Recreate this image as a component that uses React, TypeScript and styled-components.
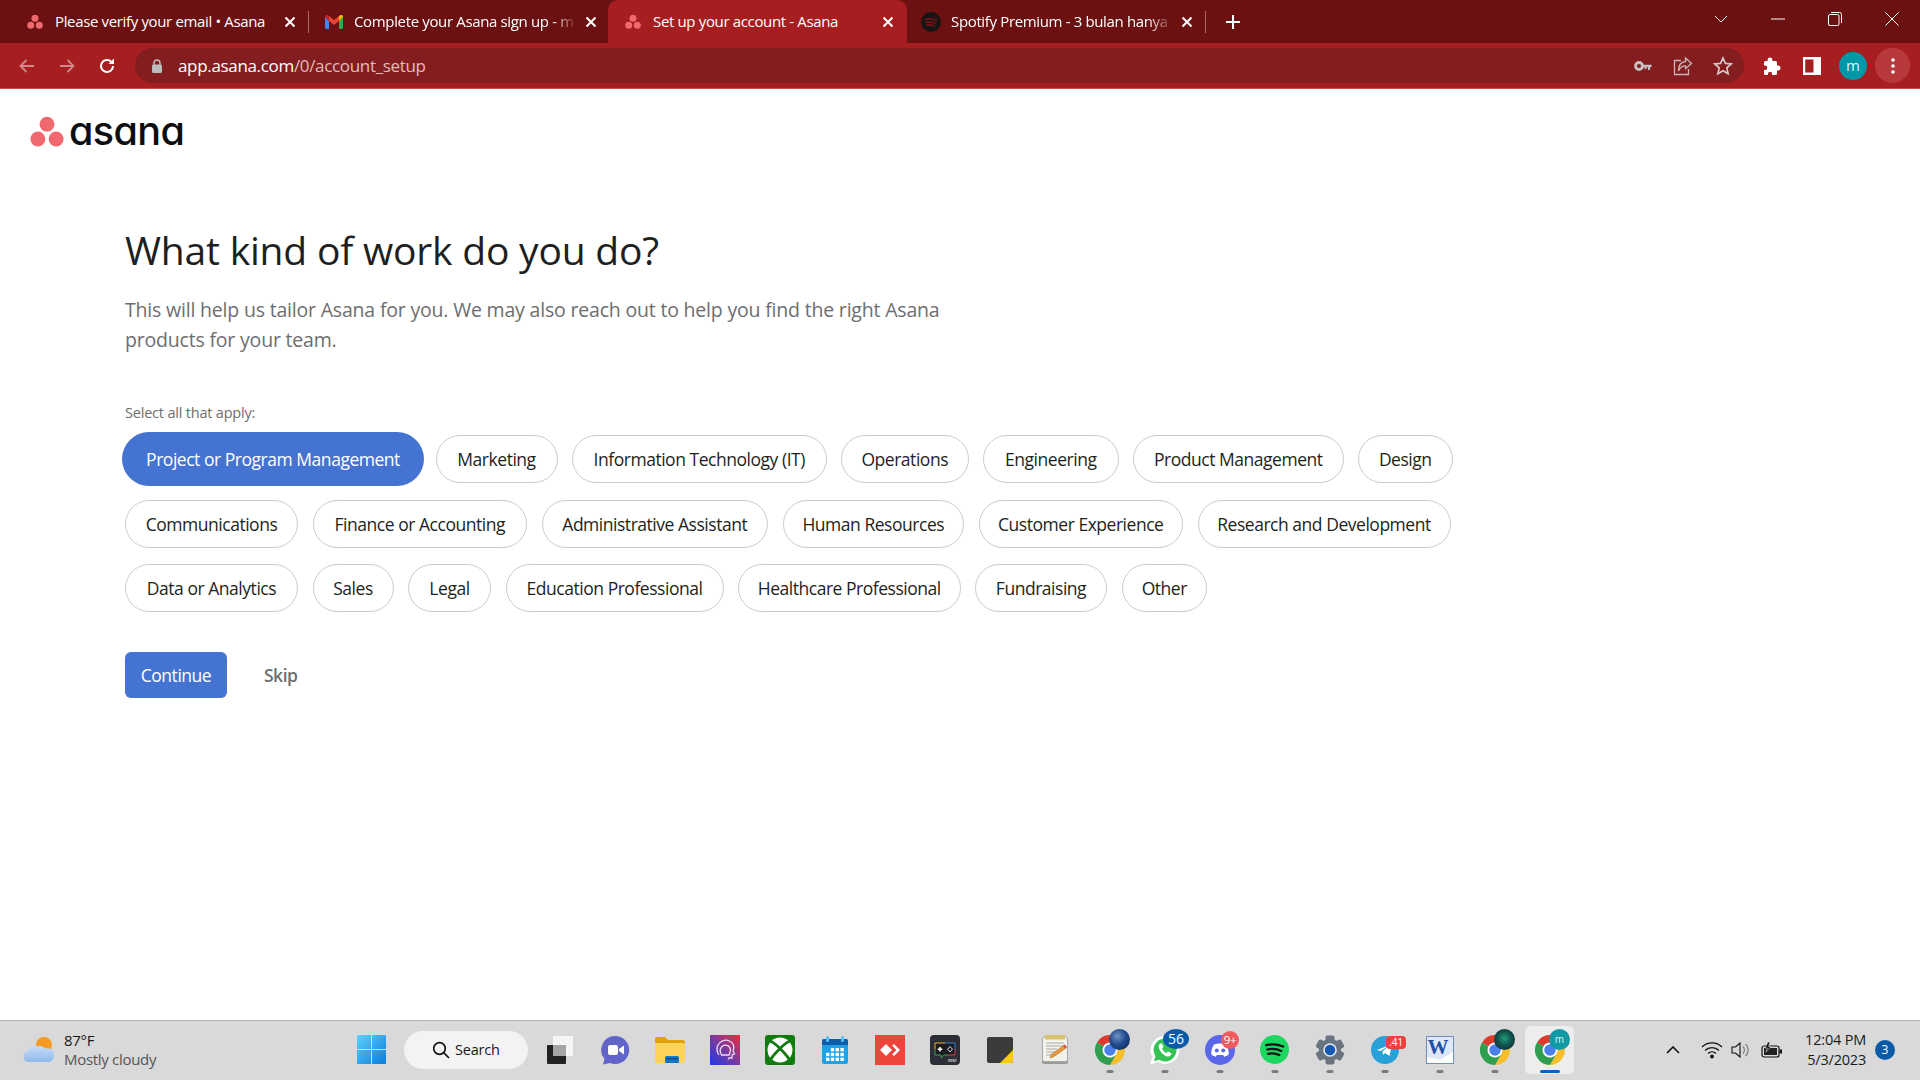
import React from 'react';
import styled, { createGlobalStyle } from 'styled-components';

const FONT = `"Open Sans", "Noto Sans", "Liberation Sans", sans-serif`;

const Global = createGlobalStyle`
  html, body { margin: 0; padding: 0; background: #fff; }
  * { box-sizing: border-box; }
`;

const Page = styled.div`
  width: 1920px; height: 1080px; overflow: hidden;
  display: flex; flex-direction: column;
  font-family: ${FONT}; background: #fff;
`;

/* ---------- browser chrome ---------- */
const TabStrip = styled.div`
  height: 43px; flex: none; background: #6b1111; display: flex; align-items: stretch;
  padding-left: 10px; color: #fff;
`;
const Tab = styled.div<{ $active?: boolean; $sep?: boolean; $pad?: number }>`
  position: relative; width: 299px; flex: none; display: flex; align-items: center;
  padding: 0 12px 0 ${p => p.$pad ?? 17}px;
  font-size: 15px; letter-spacing: -0.35px;
  background: ${p => (p.$active ? '#a61e1f' : 'transparent')};
  border-radius: ${p => (p.$active ? '10px 10px 0 0' : '0')};
  &::after {
    content: ''; position: absolute; right: 0; top: 11px; height: 22px; width: 1px;
    background: ${p => (p.$sep ? '#a86a6a' : 'transparent')};
  }
`;
const FavBox = styled.span`
  width: 16px; height: 20px; flex: none; display: flex; align-items: center; justify-content: center;
  & > svg { flex: none; }
`;
const TabTitle = styled.span<{ $fade?: boolean }>`
  flex: 1; margin-left: 12px; white-space: nowrap; padding-bottom: 2px;
  ${p => (p.$fade ? '-webkit-mask-image: linear-gradient(90deg, #000 calc(100% - 22px), rgba(0,0,0,.15) 100%);' : '')}
`;
const CloseBox = styled.span`
  width: 14px; height: 14px; flex: none; display: flex; align-items: center; justify-content: center; margin-left: 10px;
`;
const NewTab = styled.div`
  width: 54px; display: flex; align-items: center; justify-content: center;
`;
const Spring = styled.div`flex: 1;`;
const WinCtrl = styled.div`
  width: 57px; display: flex; align-items: center; justify-content: center; padding-bottom: 6px;
`;
const WinControls = styled.div`
  display: flex;
`;
const Toolbar = styled.div`
  height: 46px; flex: none; background: #a61e1f; border-bottom: 1px solid #c65050;
  display: flex; align-items: flex-start; padding-top: 5px; padding-left: 7px;
`;
const NavBtn = styled.div`
  width: 40px; height: 35px; display: flex; align-items: center; justify-content: center; flex: none;
`;
const Omnibox = styled.div`
  width: 1609px; height: 35px; margin-left: 8px; flex: none; background: #841d1f; border-radius: 18px;
  display: flex; align-items: center; padding-left: 16px; font-size: 17px; letter-spacing: -0.33px;
`;
const Host = styled.span`color: #fff; margin-left: 15px;`;
const UrlPath = styled.span`color: #e0bcbc;`;
const OmniActions = styled.div`
  margin-left: auto; display: flex; align-items: center; padding-right: 1px;
`;
const OmniAction = styled.div`
  width: 40px; height: 35px; display: flex; align-items: center; justify-content: center;
`;
const ToolActions = styled.div`
  display: flex; align-items: center; margin-left: 8px;
`;
const Avatar = styled.div`
  width: 28px; height: 28px; border-radius: 50%; background: #0097a7; color: #d9f5f8;
  font-size: 15px; display: flex; align-items: center; justify-content: center; margin: 0 8px 0 7px; line-height: 1;
`;
const MenuBtn = styled.div`
  width: 35px; height: 35px; border-radius: 50%; background: #b8393b; display: flex; align-items: center; justify-content: center;
`;

/* ---------- content ---------- */
const Content = styled.main`
  flex: 1; display: flex; flex-direction: column; padding: 0 0 0 125px; min-height: 0;
`;
const LogoRow = styled.div`
  display: flex; align-items: center; margin: 28px 0 0 -95px; height: 30px; gap: 5px;
`;
const Wordmark = styled.span`
  font-family: Inter, ${FONT}; font-weight: 500; font-size: 39.5px; letter-spacing: -0.6px; line-height: 30px;
  color: #0d0e10; font-feature-settings: "cv11" 1; padding-bottom: 3px;
`;
const Title = styled.h1`
  margin: 79px 0 0; font-size: 39px; font-weight: 400; line-height: 48px; color: #1e1f21; letter-spacing: -0.2px;
`;
const Lead = styled.p`
  margin: 21px 0 0; width: 860px; font-size: 19.5px; line-height: 30px; color: #6d6e6f; letter-spacing: -0.19px;
`;
const Hint = styled.div`
  margin-top: 48px; font-size: 14.5px; line-height: 20px; color: #6d6e6f; letter-spacing: -0.2px;
`;
const Pills = styled.div`
  margin-top: 12px; width: 1340px; display: flex; flex-wrap: wrap; align-items: center; column-gap: 14.5px; row-gap: 16.5px;
`;
const Pill = styled.button<{ $selected?: boolean; $w: number }>`
  font-family: ${FONT}; font-size: 17.5px; letter-spacing: -0.47px; white-space: nowrap; padding: 0;
  width: ${p => p.$w}px;
  height: ${p => (p.$selected ? 54 : 48)}px;
  margin: ${p => (p.$selected ? '-3px' : '0')};
  border-radius: 27px; flex: none;
  border: ${p => (p.$selected ? 'none' : '1px solid #cfcbcb')};
  background: ${p => (p.$selected ? '#4573d2' : '#fff')};
  color: ${p => (p.$selected ? '#fff' : '#1e1f21')};
`;
const Actions = styled.div`
  margin-top: 40px; display: flex; align-items: center; gap: 37px;
`;
const Continue = styled.button`
  width: 102px; height: 46px; border: none; border-radius: 6px; background: #4573d2; color: #fff;
  font-family: ${FONT}; font-size: 17.5px; letter-spacing: -0.47px; padding: 0;
`;
const Skip = styled.span`
  font-size: 17.5px; font-weight: 600; color: #6d6e6f; letter-spacing: -0.5px;
`;

/* ---------- taskbar ---------- */
const Taskbar = styled.footer`
  height: 60px; flex: none; background: #d9d9d9; border-top: 1px solid #b3b3b3; padding-bottom: 2px;
  display: flex; align-items: center; position: relative;
`;
const Weather = styled.div`
  width: 344px; flex: none; display: flex; align-items: center; padding-left: 23px; gap: 7px;
`;
const WeatherText = styled.div`
  font-size: 15px; line-height: 19px; color: #1a1a1a; letter-spacing: -0.3px;
`;
const WeatherSub = styled.div`color: #555;`;
const TaskItem = styled.div<{ $active?: boolean }>`
  position: relative; width: 55px; height: 48px; flex: none; display: flex; align-items: center; justify-content: center;
  &::before {
    content: ''; position: absolute; inset: 0 3px; border-radius: 5px;
    background: ${p => (p.$active ? '#ededed' : 'transparent')};
  }
  & > svg { position: relative; }
`;
const RunDot = styled.i<{ $active?: boolean }>`
  position: absolute; bottom: 1px; left: 50%; transform: translateX(-50%);
  width: ${p => (p.$active ? 20 : 7)}px; height: 3px; border-radius: 2px;
  background: ${p => (p.$active ? '#0067c0' : '#7b7b7b')};
`;
const CountBadge = styled.span`
  position: absolute; top: 3px; right: 3px; width: 26px; height: 20px;
  border-radius: 50%; background: #0a5aa8; color: #fff; font-size: 14px;
  display: flex; align-items: center; justify-content: center; line-height: 1;
`;
const SmallBadge = styled.span`
  position: absolute; top: 5px; right: 8px; width: 18px; height: 18px;
  border-radius: 50%; background: #ef5a5f; color: #fff; font-size: 11.5px;
  display: flex; align-items: center; justify-content: center; line-height: 1; letter-spacing: -0.3px;
`;
const RectBadge = styled.span`
  position: absolute; top: 10px; right: 6px; width: 20px; height: 13px; border-radius: 4px; background: #ee3f3f;
  color: #fff; font-size: 10.5px; display: flex; align-items: center; justify-content: center; line-height: 1; letter-spacing: -0.3px;
`;
const ProfileBubble = styled.span<{ $bg: string }>`
  position: absolute; top: 3px; right: 7px; width: 21px; height: 21px; border-radius: 50%;
  background: ${p => p.$bg}; color: #d9f5f8; font-size: 10px; display: flex; align-items: center; justify-content: center; line-height: 1;
`;
const SearchBox = styled.div`
  width: 124px; height: 38px; flex: none; margin: 0 4px 0 5px; border-radius: 19px; background: #f3f3f3;
  display: flex; align-items: center; padding-left: 28px; gap: 5px; font-size: 14.5px; color: #1a1a1a; letter-spacing: -0.2px;
`;
const Tray = styled.div`
  position: absolute; inset: 0 0 2px auto; display: flex; align-items: center;
`;
const TrayIcon = styled.div<{ $w: number }>`
  width: ${p => p.$w}px; display: flex; align-items: center; justify-content: center;
`;
const Clock = styled.div`
  width: 74px; margin-left: 2px; text-align: right; font-size: 14.5px; line-height: 20px; color: #1a1a1a; letter-spacing: -0.2px;
`;
const NotifyBadge = styled.div`
  width: 20px; height: 20px; border-radius: 50%; background: #0a5aa8; color: #fff; font-size: 12px;
  display: flex; align-items: center; justify-content: center; margin: 0 25px 0 9px;
`;

/* ---------- icons ---------- */
const Close = () => (
  <svg width="12" height="12" viewBox="0 0 12 12"><path d="M1.500 1.500l9 9M10.500 1.500l-9 9" stroke="#fff" strokeWidth="2" /></svg>
);
const AsanaDots = ({ s = 16, c = '#f0696e' }: { s?: number; c?: string }) => (
  <svg width={s} height={s} viewBox="0 0 32 32">
    <circle cx="16" cy="8.600" r="7" fill={c} /><circle cx="7.400" cy="22.600" r="7" fill={c} /><circle cx="24.600" cy="22.600" r="7" fill={c} />
  </svg>
);
const Gmail = () => (
  <svg width="18" height="14" viewBox="0 0 18 14">
    <path d="M0 2v10.500A1.500 1.500 0 0 0 1.500 14H4V6z" fill="#4285f4" />
    <path d="M18 2v10.500a1.500 1.500 0 0 1-1.500 1.500H14V6z" fill="#34a853" />
    <path d="M14 6V1l1.500-1C16.800-.5 18 .5 18 2z" fill="#fbbc04" />
    <path d="M4 6V1L2.500 0C1.200-.5 0 .5 0 2z" fill="#c5221f" />
    <path d="M4 1l5 4 5-4v5L9 10 4 6z" fill="#ea4335" />
  </svg>
);
const SpotifyDark = () => (
  <svg width="20" height="20" viewBox="0 0 20 20">
    <circle cx="10" cy="10" r="10" fill="#181414" />
    <path d="M4.500 7.400c3.700-1 7.800-.7 11 1M5.200 10.400c3-.8 6.500-.5 9.300 1M5.800 13.200c2.500-.6 5.300-.4 7.600.9" fill="none" stroke="#6f1416" strokeWidth="1.700" strokeLinecap="round" />
  </svg>
);
const Arrow = ({ d, c }: { d: string; c: string }) => (
  <svg width="18" height="18" viewBox="0 0 18 18"><path d={d} fill="none" stroke={c} strokeWidth="1.800" /></svg>
);
const BACK = 'M16 9H3M8.500 3l-6 6 6 6';
const FORWARD = 'M2 9h13M9.500 3l6 6-6 6';
const Reload = () => (
  <svg width="18" height="18" viewBox="0 0 18 18">
    <path d="M15 9a6 6 0 1 1-1.800-4.300" fill="none" stroke="#fff" strokeWidth="2" />
    <path d="M16 1.500V7h-5.500z" fill="#fff" />
  </svg>
);
const Lock = () => (
  <svg width="12" height="14" viewBox="0 0 12 14">
    <path d="M3 6V4a3 3 0 0 1 6 0v2" fill="none" stroke="#bdbdbd" strokeWidth="1.500" />
    <rect x="1" y="5.500" width="10" height="8.500" rx="1.500" fill="#bdbdbd" />
  </svg>
);
const KeyIcon = () => (
  <svg width="18" height="12" viewBox="0 0 18 12">
    <circle cx="5" cy="6" r="3.500" fill="none" stroke="#c9c1c1" strokeWidth="2.800" />
    <path d="M8 4.700h9.500v2.600H16V10h-2V7.300h-1.500V9h-2V7.300H8z" fill="#c9c1c1" />
  </svg>
);
const ShareIcon = () => (
  <svg width="20" height="20" viewBox="0 0 20 20" fill="none" stroke="#c9b6b6" strokeWidth="1.300">
    <path d="M8 4.500H1.500v14h14V13" />
    <path d="M12.500 2l6 5.500-6 5V9.800C9 9.800 6.800 11.500 5.500 15c0-5.500 2.500-9 7-9.500z" />
  </svg>
);
const StarIcon = () => (
  <svg width="20" height="20" viewBox="0 0 20 20">
    <path d="M10 2l2.400 5.400 5.800.6-4.400 3.900 1.300 5.800L10 14.800l-5.100 2.900 1.300-5.800L1.800 8l5.800-.6z" fill="none" stroke="#d6c8c8" strokeWidth="1.700" />
  </svg>
);
const Puzzle = () => (
  <svg width="20" height="20" viewBox="0 0 20 20">
    <path d="M8 1.500a2.400 2.400 0 0 1 2.400 2.400V5h3.100a1.500 1.500 0 0 1 1.500 1.500v3h1a2.500 2.500 0 0 1 0 5h-1v3a1.500 1.500 0 0 1-1.500 1.500H10v-1.300a2 2 0 0 0-4 0V19H3.500A1.500 1.500 0 0 1 2 17.500V14h1a2.300 2.300 0 0 0 0-4.600H2V6.500A1.500 1.500 0 0 1 3.500 5h2.100V3.900A2.400 2.400 0 0 1 8 1.500z" fill="#fff" />
  </svg>
);
const SidePanel = () => (
  <svg width="18" height="18" viewBox="0 0 18 18">
    <path d="M0 0h18v18H0z M2.200 2.500v13h8.300v-13z" fill="#fff" fillRule="evenodd" />
  </svg>
);
const Kebab = () => (
  <svg width="4" height="16" viewBox="0 0 4 16"><circle cx="2" cy="2" r="1.800" fill="#fff" /><circle cx="2" cy="8" r="1.800" fill="#fff" /><circle cx="2" cy="14" r="1.800" fill="#fff" /></svg>
);
const Chevron = () => <svg width="14" height="8" viewBox="0 0 14 8"><path d="M1 1l6 6 6-6" fill="none" stroke="#fff" /></svg>;
const Minimize = () => <svg width="14" height="2" viewBox="0 0 14 2"><path d="M0 1h14" stroke="#fff" /></svg>;
const Restore = () => (
  <svg width="14" height="14" viewBox="0 0 14 14" fill="none" stroke="#fff"><rect x=".5" y="2.500" width="10.500" height="11" rx="1.500" /><path d="M3 .5h8.500a2 2 0 0 1 2 2V11" /></svg>
);
const WinX = () => <svg width="14" height="14" viewBox="0 0 14 14"><path d="M.5.5l13 13M13.500.5l-13 13" stroke="#fff" /></svg>;
const Plus = () => <svg width="14" height="14" viewBox="0 0 14 14"><path d="M7 0v14M0 7h14" stroke="#fff" strokeWidth="2" /></svg>;

const Cloud = () => (
  <svg width="34" height="30" viewBox="0 0 34 30">
    <defs><linearGradient id="cl" x1="0" y1="0" x2="0" y2="1"><stop offset="0" stopColor="#c7defa" /><stop offset="1" stopColor="#8fb8ea" /></linearGradient></defs>
    <circle cx="21" cy="10" r="8" fill="#f59a23" />
    <path d="M6 27a5.500 5.500 0 0 1-1-10.900C6 12 10 10 14 11.500c2-1 6-1 8 2 3-.5 8 0 9 5 .5 4-1.500 8.500-5 8.500z" fill="url(#cl)" />
  </svg>
);
const WinLogo = () => (
  <svg width="29" height="29" viewBox="0 0 29 29">
    <defs><linearGradient id="w1" x1="0" y1="0" x2="1" y2="1"><stop offset="0" stopColor="#5fd0fb" /><stop offset="1" stopColor="#0b7bd8" /></linearGradient></defs>
    <path d="M1 0h13v14H0V1a1 1 0 0 1 1-1zM15 0h13a1 1 0 0 1 1 1v13H15zM0 15h14v14H1a1 1 0 0 1-1-1zM15 15h14v13a1 1 0 0 1-1 1H15z" fill="url(#w1)" />
  </svg>
);
const SearchGlyph = () => (
  <svg width="18" height="18" viewBox="0 0 18 18" fill="none" stroke="#111" strokeWidth="1.700"><circle cx="7.500" cy="7.500" r="5.800" /><path d="M11.700 11.700L17 17" /></svg>
);
const TaskView = () => (
  <svg width="26" height="28" viewBox="0 0 26 28">
    <rect x="6" y="0" width="20" height="20" rx="1" fill="#f5f5f5" />
    <rect x="0" y="9" width="19" height="19" rx="1" fill="#222" />
    <rect x="6" y="9" width="13" height="11" fill="#a5a5a5" />
  </svg>
);
const Teams = () => (
  <svg width="30" height="30" viewBox="0 0 30 30">
    <path d="M15 1a14 14 0 1 1-5 27l-7 1.500 1.500-5.500A14 14 0 0 1 15 1z" fill="#6264c9" />
    <rect x="8" y="10" width="10" height="10" rx="2" fill="#fff" /><path d="M19 14l5-3.500v9L19 16z" fill="#fff" />
  </svg>
);
const Folder = () => (
  <svg width="30" height="27" viewBox="0 0 30 27">
    <path d="M0 3a2 2 0 0 1 2-2h8l3 3h15a2 2 0 0 1 2 2v4H0z" fill="#e0a30f" />
    <path d="M0 7h28a2 2 0 0 1 2 2v16a2 2 0 0 1-2 2H2a2 2 0 0 1-2-2z" fill="#fdd35c" />
    <rect x="10" y="20" width="14" height="7" rx="1.500" fill="#1278c8" /><rect x="11" y="22" width="12" height="1.500" fill="#0a4f8a" />
  </svg>
);
const PurpleApp = () => (
  <svg width="30" height="30" viewBox="0 0 30 30">
    <defs><linearGradient id="pa" x1="0" y1="1" x2="1" y2="0"><stop offset="0" stopColor="#1c39e8" /><stop offset=".5" stopColor="#7b3aa0" /><stop offset="1" stopColor="#f02a3c" /></linearGradient></defs>
    <rect width="30" height="30" fill="url(#pa)" />
    <path d="M9 20c-2-3-2.500-6-1.500-9C9.500 6 15 4 19.500 6c4 2 5 6 3.500 10l1.500 3-2.500 1v3h-3l-1 1.500" fill="none" stroke="#eedcf2" strokeWidth="1.300" />
    <path d="M11.500 20c-1.500-2.500-1.500-6 0-8 2-2.500 6-2.500 8 0 1.500 2 1 5-.5 8h-7.500z" fill="none" stroke="#eedcf2" strokeWidth="1.300" />
  </svg>
);
const Xbox = () => (
  <svg width="30" height="30" viewBox="0 0 30 30">
    <rect width="30" height="30" rx="3" fill="#107c10" />
    <circle cx="15" cy="15" r="12.500" fill="#fff" />
    <g fill="none" stroke="#107c10" strokeWidth="2.800">
      <path d="M5 6c4 1.500 7 4.500 10 7.500C18 10.500 21 7.500 25 6" />
      <path d="M15 13.500C11 17.500 7.500 21 5.500 25M15 13.500C19 17.500 22.500 21 24.500 25" />
    </g>
  </svg>
);
const Calendar = () => (
  <svg width="26" height="28" viewBox="0 0 26 28">
    <rect y="3" width="26" height="25" rx="2" fill="#1ea1e6" />
    <path d="M0 5a2 2 0 0 1 2-2h22a2 2 0 0 1 2 2v4H0z" fill="#0f5da8" />
    <rect x="4" y="0" width="3" height="6" rx="1.500" fill="#4fc3f7" /><rect x="19" y="0" width="3" height="6" rx="1.500" fill="#4fc3f7" />
    <g fill="#fff">
      {[0, 1, 2].map(r => [0, 1, 2, 3].map(c => (r === 0 && c === 0 ? null : <rect key={`${r}${c}`} x={4 + c * 4.800} y={12 + r * 4.800} width="3.400" height="3.400" />)))}
    </g>
  </svg>
);
const AnyDesk = () => (
  <svg width="30" height="30" viewBox="0 0 30 30">
    <rect width="30" height="30" fill="#ef443b" />
    <path d="M11 9l6 6-6 6-6-6z" fill="#fff" /><path d="M19 9l6 6-6 6-1.800-1.800L21.400 15l-4.200-4.200z" fill="#fff" />
  </svg>
);
const MsiApp = () => (
  <svg width="30" height="30" viewBox="0 0 30 30">
    <rect width="30" height="30" rx="4" fill="#2b2e37" />
    <path d="M5 8h20v12H14l-3 3v-3H5z" fill="#1b1c22" />
    <path d="M15 8H5v6" fill="none" stroke="#e8b620" strokeWidth="1" /><path d="M25 14V8H15" fill="none" stroke="#2f7fd6" strokeWidth="1" /><path d="M5 14v6h6v3l3-3h4" fill="none" stroke="#3f9e4d" strokeWidth="1" /><path d="M18 20h7v-6" fill="none" stroke="#d64545" strokeWidth="1" />
    <path d="M10 12v4.500M7.700 14.200h4.600" stroke="#fff" strokeWidth="1.500" fill="none" />
    <path d="M20 11.500l2.500 2.700-2.500 2.700-2.500-2.700z" stroke="#ddd" strokeWidth="1" fill="none" />
    <text x="26.500" y="27" textAnchor="end" fontFamily="Liberation Sans, sans-serif" fontStyle="italic" fontWeight="700" fontSize="5" fill="#cfcfcf">msi</text>
  </svg>
);
const Sticky = () => (
  <svg width="26" height="26" viewBox="0 0 26 26">
    <rect width="26" height="26" rx="2" fill="#3b3b3b" />
    <path d="M26 13v11a2 2 0 0 1-2 2H13z" fill="#f7c90f" />
  </svg>
);
const Notepad = () => (
  <svg width="28" height="29" viewBox="0 0 28 29">
    <path d="M1 24h26v3a2 2 0 0 1-2 2H3a2 2 0 0 1-2-2z" fill="#9a9a9a" />
    <rect x="1.500" y="2" width="25" height="24.500" rx="2" fill="#f2f2ea" stroke="#a8a8a8" />
    <rect x="4" y="0" width="20" height="4.500" fill="#d8c36e" />
    <path d="M5 8h18M5 11h18M5 14h11M5 17h9M5 20h8" stroke="#a8a8a8" />
    <path d="M9 23l1.300-3.500L22 11l2.500 2.500-11.500 8z" fill="#e89a3c" stroke="#a45f14" strokeWidth=".5" />
    <path d="M22 11l2.500 2.500 1.500-1.500L23.500 9.500z" fill="#d94a3a" />
  </svg>
);
const Chrome = () => (
  <svg width="30" height="30" viewBox="0 0 24 24">
    <path d="M1.600 6A12 12 0 0 1 22.390 6H12a6 6 0 0 0-5.200 3z" fill="#dc3a2c" />
    <path d="M22.390 6A12 12 0 0 1 12 24l5.200-9A6 6 0 0 0 12 6z" fill="#f7c02a" />
    <path d="M12 24A12 12 0 0 1 1.600 6l5.200 3a6 6 0 0 0 10.400 6z" fill="#2f9e4f" />
    <circle cx="12" cy="12" r="5.800" fill="#fff" /><circle cx="12" cy="12" r="4.600" fill="#4a80ec" />
  </svg>
);
const WhatsApp = () => (
  <svg width="30" height="30" viewBox="0 0 30 30">
    <path d="M15 1a14 14 0 1 1-7 26L0 29.500l2.500-7.500A14 14 0 0 1 15 1z" fill="#fff" />
    <path d="M15 3.500a11.500 11.500 0 1 1-6 21.300l-5 1.500 1.500-5A11.500 11.500 0 0 1 15 3.500z" fill="#37c354" />
    <path d="M10.500 8.500c-2 1-2.500 3.500-.5 7 2 3.500 5.500 6 8 6 2 0 3.500-1.500 3.500-3l-3.500-2-1.500 1.500c-2-.8-3.500-2.500-4.500-4.500l1.500-1.500L12 8.500z" fill="#fff" />
  </svg>
);
const Discord = () => (
  <svg width="30" height="30" viewBox="0 0 30 30">
    <circle cx="15" cy="15" r="15" fill="#5a67ea" />
    <path d="M9 9.500c4-1.500 8-1.500 12 0 2 3 3 6.500 2.700 10-1.500 1.200-3 1.800-4.500 2.200l-1-1.700h-6.400l-1 1.700c-1.500-.4-3-1-4.500-2.200C6 16 7 12.500 9 9.500z" fill="#fff" />
    <circle cx="11.800" cy="15.500" r="2" fill="#5a67ea" /><circle cx="18.200" cy="15.500" r="2" fill="#5a67ea" />
  </svg>
);
const Spotify = () => (
  <svg width="29" height="29" viewBox="0 0 30 30">
    <circle cx="15" cy="15" r="15" fill="#1ed760" />
    <path d="M6.500 10.500c6-1.500 12-1 17.500 1.500M7.500 15c5-1.200 10-.8 14.500 1.500M8.500 19.500c4-1 8-.6 11.500 1.200" fill="none" stroke="#111" strokeWidth="2.300" strokeLinecap="round" />
  </svg>
);
const SettingsGear = () => (
  <svg width="30" height="30" viewBox="0 0 30 30">
    <g fill="#6a7480">
      {[0, 60, 120, 180, 240, 300].map(a => (
        <rect key={a} x="10.500" y="0.500" width="9" height="8" rx="2" transform={`rotate(${a} 15 15)`} />
      ))}
      <circle cx="15" cy="15" r="11" />
    </g>
    <circle cx="15" cy="15" r="6.800" fill="#e6e6e6" /><circle cx="15" cy="15" r="5.200" fill="#1559b4" />
  </svg>
);
const Telegram = () => (
  <svg width="28" height="28" viewBox="0 0 28 28">
    <circle cx="14" cy="14" r="14" fill="#2aa0d8" />
    <path d="M6 14l15-6-2.500 12-4.500-3-2 2-.5-3.500 6-5.500-8 5z" fill="#fff" />
  </svg>
);
const Word = () => (
  <svg width="28" height="28" viewBox="0 0 28 28">
    <rect x=".5" y=".5" width="27" height="27" fill="#dfe8f7" stroke="#6f8fbf" />
    <path d="M1 21l13 3 13-8v11H1z" fill="#fff" />
    <text x="12" y="18" textAnchor="middle" fontFamily="Liberation Serif, serif" fontWeight="700" fontSize="21" fill="#1f4fa8">W</text>
  </svg>
);

const SearchLabel = styled.span``;

const pills: { label: string; w: number; selected?: boolean }[] = [
  { label: 'Project or Program Management', w: 302, selected: true },
  { label: 'Marketing', w: 122 },
  { label: 'Information Technology (IT)', w: 254.500 },
  { label: 'Operations', w: 127.500 },
  { label: 'Engineering', w: 135.500 },
  { label: 'Product Management', w: 210.500 },
  { label: 'Design', w: 94.500 },
  { label: 'Communications', w: 173 },
  { label: 'Finance or Accounting', w: 214.500 },
  { label: 'Administrative Assistant', w: 226.500 },
  { label: 'Human Resources', w: 181.500 },
  { label: 'Customer Experience', w: 204.500 },
  { label: 'Research and Development', w: 253 },
  { label: 'Data or Analytics', w: 173 },
  { label: 'Sales', w: 81 },
  { label: 'Legal', w: 83 },
  { label: 'Education Professional', w: 218 },
  { label: 'Healthcare Professional', w: 222.500 },
  { label: 'Fundraising', w: 132 },
  { label: 'Other', w: 85.500 },
];

const GLOBE = 'radial-gradient(circle at 40% 35%, #6f93c4 0%, #1f4c8f 45%, #0b2348 100%)';
const AURORA = 'radial-gradient(circle at 50% 45%, #1f9c77 0%, #0f4a48 50%, #102a33 100%)';

export default function App() {
  return (
    <Page>
      <Global />
      <TabStrip>
        <Tab $sep><FavBox><AsanaDots /></FavBox><TabTitle>Please verify your email • Asana</TabTitle><CloseBox><Close /></CloseBox></Tab>
        <Tab><FavBox><Gmail /></FavBox><TabTitle $fade>Complete your Asana sign up - m</TabTitle><CloseBox><Close /></CloseBox></Tab>
        <Tab $active><FavBox><AsanaDots /></FavBox><TabTitle>Set up your account - Asana</TabTitle><CloseBox><Close /></CloseBox></Tab>
        <Tab $sep $pad={16}><FavBox><SpotifyDark /></FavBox><TabTitle $fade>Spotify Premium - 3 bulan hanya</TabTitle><CloseBox><Close /></CloseBox></Tab>
        <NewTab><Plus /></NewTab>
        <Spring />
        <WinControls>
          <WinCtrl><Chevron /></WinCtrl>
          <WinCtrl><Minimize /></WinCtrl>
          <WinCtrl><Restore /></WinCtrl>
          <WinCtrl><WinX /></WinCtrl>
        </WinControls>
      </TabStrip>
      <Toolbar>
        <NavBtn><Arrow d={BACK} c="#d08a8a" /></NavBtn>
        <NavBtn><Arrow d={FORWARD} c="#d08a8a" /></NavBtn>
        <NavBtn><Reload /></NavBtn>
        <Omnibox>
          <Lock />
          <Host>app.asana.com<UrlPath>/0/account_setup</UrlPath></Host>
          <OmniActions>
            <OmniAction><KeyIcon /></OmniAction>
            <OmniAction><ShareIcon /></OmniAction>
            <OmniAction><StarIcon /></OmniAction>
          </OmniActions>
        </Omnibox>
        <ToolActions>
          <NavBtn><Puzzle /></NavBtn>
          <NavBtn><SidePanel /></NavBtn>
          <Avatar>m</Avatar>
          <MenuBtn><Kebab /></MenuBtn>
        </ToolActions>
      </Toolbar>
      <Content>
        <LogoRow>
          <AsanaDots s={34} />
          <Wordmark>asana</Wordmark>
        </LogoRow>
        <Title>What kind of work do you do?</Title>
        <Lead>This will help us tailor Asana for you. We may also reach out to help you find the right Asana products for your team.</Lead>
        <Hint>Select all that apply:</Hint>
        <Pills>
          {pills.map(r => (
            <Pill key={r.label} $selected={r.selected} $w={r.w}>{r.label}</Pill>
          ))}
        </Pills>
        <Actions>
          <Continue>Continue</Continue>
          <Skip>Skip</Skip>
        </Actions>
      </Content>
      <Taskbar>
        <Weather>
          <Cloud />
          <WeatherText>87°F<WeatherSub>Mostly cloudy</WeatherSub></WeatherText>
        </Weather>
        <TaskItem><WinLogo /></TaskItem>
        <SearchBox><SearchGlyph /><SearchLabel>Search</SearchLabel></SearchBox>
        <TaskItem><TaskView /></TaskItem>
        <TaskItem><Teams /></TaskItem>
        <TaskItem><Folder /></TaskItem>
        <TaskItem><PurpleApp /></TaskItem>
        <TaskItem><Xbox /></TaskItem>
        <TaskItem><Calendar /></TaskItem>
        <TaskItem><AnyDesk /></TaskItem>
        <TaskItem><MsiApp /></TaskItem>
        <TaskItem><Sticky /></TaskItem>
        <TaskItem><Notepad /></TaskItem>
        <TaskItem><Chrome /><ProfileBubble $bg={GLOBE} /><RunDot /></TaskItem>
        <TaskItem><WhatsApp /><CountBadge>56</CountBadge><RunDot /></TaskItem>
        <TaskItem><Discord /><SmallBadge>9+</SmallBadge><RunDot /></TaskItem>
        <TaskItem><Spotify /><RunDot /></TaskItem>
        <TaskItem><SettingsGear /><RunDot /></TaskItem>
        <TaskItem><Telegram /><RectBadge>.41</RectBadge><RunDot /></TaskItem>
        <TaskItem><Word /><RunDot /></TaskItem>
        <TaskItem><Chrome /><ProfileBubble $bg={AURORA} /><RunDot /></TaskItem>
        <TaskItem $active><Chrome /><ProfileBubble $bg="#0f9aa5">m</ProfileBubble><RunDot $active /></TaskItem>
        <Tray>
          <TrayIcon $w={46}><svg width="14" height="8" viewBox="0 0 14 8"><path d="M1 7l6-6 6 6" fill="none" stroke="#111" strokeWidth="1.600" /></svg></TrayIcon>
          <TrayIcon $w={32}><svg width="22" height="18" viewBox="0 0 22 18" fill="none" stroke="#111" strokeWidth="1.200"><path d="M1 6a14 14 0 0 1 20 0M4 9.500a10 10 0 0 1 14 0M7 12.500a6 6 0 0 1 8 0" /><circle cx="11" cy="15.500" r="1.300" fill="#111" /></svg></TrayIcon>
          <TrayIcon $w={26}><svg width="20" height="18" viewBox="0 0 20 18" fill="none" stroke="#111" strokeWidth="1.100"><path d="M1 6h3.500L9 2v14l-4.500-4H1z" /><path d="M12 5.500a5 5 0 0 1 0 7M14.500 3a8 8 0 0 1 0 12" stroke="#777" /></svg></TrayIcon>
          <TrayIcon $w={36}><svg width="22" height="16" viewBox="0 0 22 16"><rect x="1" y="4" width="17" height="11" rx="2" fill="none" stroke="#111" strokeWidth="1.200" /><rect x="3" y="6" width="13" height="7" fill="#222" /><rect x="18.500" y="7.500" width="2.500" height="4" fill="#111" /><path d="M7 0L4 6h2.500L5 10l5-5.500H7.500L9 0z" fill="#111" stroke="#d9d9d9" strokeWidth=".6" /></svg></TrayIcon>
          <Clock>12:04 PM<br />5/3/2023</Clock>
          <NotifyBadge>3</NotifyBadge>
        </Tray>
      </Taskbar>
    </Page>
  );
}
